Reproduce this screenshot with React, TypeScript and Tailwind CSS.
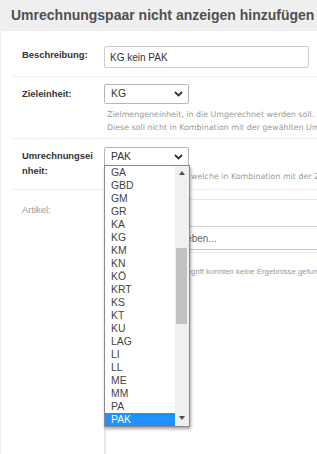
import React from "react";

const units = [
  "GA", "GBD", "GM", "GR", "KA", "KG", "KM", "KN", "KÖ", "KRT",
  "KS", "KT", "KU", "LAG", "LI", "LL", "ME", "MM", "PA", "PAK",
];

function Chevron() {
  return (
    <svg width="9" height="6" viewBox="0 0 9 6" className="shrink-0">
      <path d="M1 1 L4.5 4.5 L8 1" fill="none" stroke="#333" strokeWidth="1.8" />
    </svg>
  );
}

function Select({ value }: { value: string }) {
  return (
    <div className="w-[85px] h-[20px] border border-[#b5b5b5] rounded-[2px] bg-white flex items-center justify-between pl-[6px] pr-[5px] text-[10.4px] text-[#333]">
      <span>{value}</span>
      <Chevron />
    </div>
  );
}

export default function App() {
  return (
    <div className="w-[317px] h-[454px] overflow-hidden bg-[#efefef] relative font-['Liberation_Sans',Arial,sans-serif]">
      <div className="h-[31px] pl-[11px] flex items-center">
        <h1 className="text-[14px] font-bold text-[#505050] whitespace-nowrap">
          Umrechnungspaar nicht anzeigen hinzufügen
        </h1>
      </div>

      <div className="ml-[1px] h-[423px] bg-white pl-[11px]">
        {/* Beschreibung */}
        <div className="h-[46px] border-b border-[#eeeeee] flex pt-[15px]">
          <div className="w-[92px] pl-[10px] pt-[2px] text-[9.4px] leading-[14px] font-bold text-[#333]">
            Beschreibung:
          </div>
          <div className="w-[205px] h-[22px] border border-[#cccccc] rounded-[2px] flex items-center pl-[5px] text-[10px] text-[#333]">
            KG kein PAK
          </div>
        </div>

        {/* Zieleinheit */}
        <div className="h-[62px] border-b border-[#eeeeee] flex pt-[7px]">
          <div className="w-[92px] pl-[10px] pt-[3px] text-[9.4px] leading-[14px] font-bold text-[#333]">
            Zieleinheit:
          </div>
          <div className="flex-1 min-w-0 overflow-hidden">
            <Select value="KG" />
            <div className="mt-[4px] pl-[3px] font-['DejaVu_Sans',Verdana,sans-serif] text-[7.9px] leading-[13px] text-[#999] whitespace-nowrap">
              Zielmengeneinheit, in die Umgerechnet werden soll.
              <br />
              Diese soll nicht in Kombination mit der gewählten Umrechnungseinheit angezeigt werden.
            </div>
          </div>
        </div>

        {/* Umrechnungseinheit */}
        <div className="h-[51px] border-b border-[#eeeeee] flex pt-[8px]">
          <div className="w-[92px] pl-[10px] pt-[1px] text-[9.4px] leading-[15px] font-bold text-[#333]">
            Umrechnungsei
            <br />
            nheit:
          </div>
          <div className="flex-1 min-w-0 overflow-hidden">
            <Select value="PAK" />
            <div className="mt-[3px] font-['DejaVu_Sans',Verdana,sans-serif] text-[7.9px] leading-[13px] text-[#999] whitespace-nowrap">
              Umrechnungseinheit, welche in Kombination mit der Zieleinheit nicht angezeigt werden soll.
            </div>
          </div>
        </div>

        {/* Artikel */}
        <div className="flex pt-[9px]">
          <div className="w-[92px] pl-[10px] pt-[4px] text-[9.4px] leading-[14px] text-[#999]">
            Artikel:
          </div>
          <div className="flex-1 min-w-0 h-[260px] overflow-hidden border-l-2 border-t border-[#e6e6e6]">
            <div className="h-[27px] border-b border-[#d2d2d2]" />
            <div className="h-[23px] border-b border-[#c4c4c4] flex items-center pl-[8px] text-[10px] text-[#666] whitespace-nowrap">
              Suchbegriff eingeben...
            </div>
            <div className="mt-[2px] border-t border-[#e6e6e6] pt-[14px] pl-[30px] text-[7.8px] leading-[10px] text-[#999] whitespace-nowrap">
              Zu dem Suchbegriff konnten keine Ergebnisse gefunden werden.
            </div>
          </div>
        </div>
      </div>

      {/* open dropdown list */}
      <div className="absolute left-[104px] top-[165px] w-[86px] h-[262px] border border-[#8a8a8a] bg-white shadow-[1px_2px_3px_rgba(0,0,0,0.35)] flex">
        <ul className="w-[70px] text-[10.4px] text-[#444]">
          {units.map((u) => (
            <li
              key={u}
              className={
                u === "PAK"
                  ? "h-[13px] leading-[13px] pl-[6px] bg-[#1e90ff] text-white"
                  : "h-[13px] leading-[13px] pl-[6px]"
              }
            >
              {u}
            </li>
          ))}
        </ul>
        <div className="w-[14px] bg-[#f0f0f0] relative">
          <svg width="6" height="4" viewBox="0 0 6 4" className="absolute left-[4px] top-[5px]">
            <path d="M0 4 L3 0 L6 4 Z" fill="#505050" />
          </svg>
          <div className="absolute left-[1px] top-[82px] w-[11px] h-[76px] bg-[#c1c1c1]" />
          <svg width="6" height="4" viewBox="0 0 6 4" className="absolute left-[4px] bottom-[6px]">
            <path d="M0 0 L3 4 L6 0 Z" fill="#505050" />
          </svg>
        </div>
      </div>
    </div>
  );
}
